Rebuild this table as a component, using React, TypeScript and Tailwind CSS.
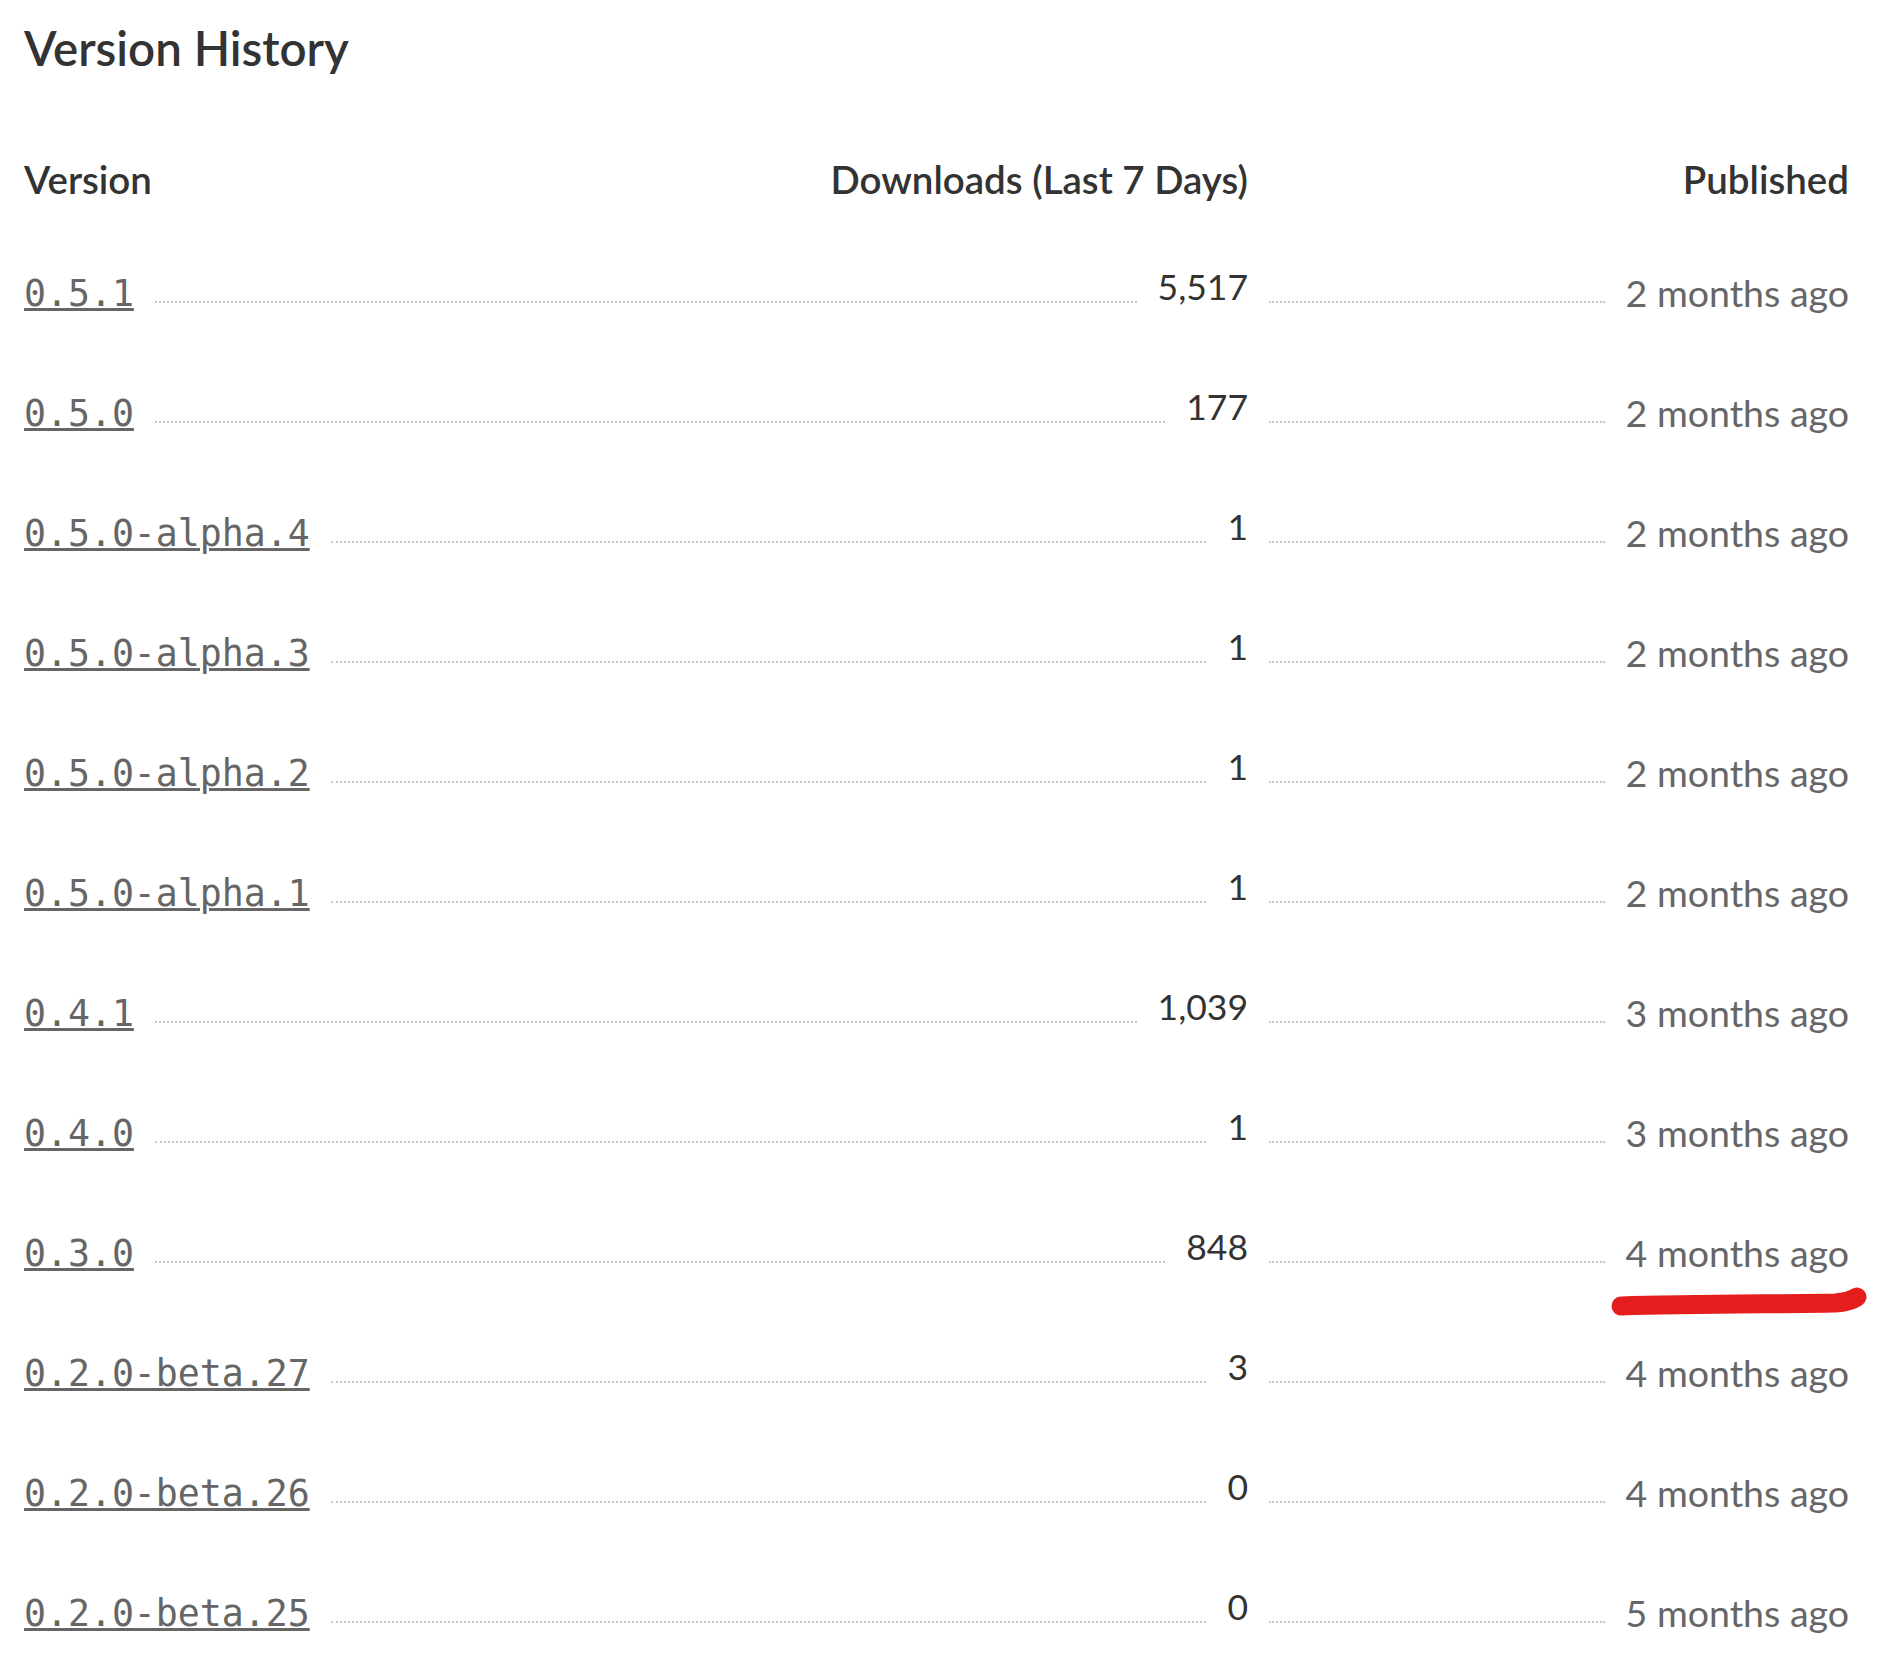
import React from "react";

interface Version {
  version: string;
  downloads: string;
  published: string;
}

const versions: Version[] = [
  { version: "0.5.1", downloads: "5,517", published: "2 months ago" },
  { version: "0.5.0", downloads: "177", published: "2 months ago" },
  { version: "0.5.0-alpha.4", downloads: "1", published: "2 months ago" },
  { version: "0.5.0-alpha.3", downloads: "1", published: "2 months ago" },
  { version: "0.5.0-alpha.2", downloads: "1", published: "2 months ago" },
  { version: "0.5.0-alpha.1", downloads: "1", published: "2 months ago" },
  { version: "0.4.1", downloads: "1,039", published: "3 months ago" },
  { version: "0.4.0", downloads: "1", published: "3 months ago" },
  { version: "0.3.0", downloads: "848", published: "4 months ago" },
  { version: "0.2.0-beta.27", downloads: "3", published: "4 months ago" },
  { version: "0.2.0-beta.26", downloads: "0", published: "4 months ago" },
  { version: "0.2.0-beta.25", downloads: "0", published: "5 months ago" },
];

const sans = "font-['Lato','Noto_Sans',sans-serif]";

export default function App() {
  return (
    <div className={`relative min-h-[1680px] bg-white px-6 ${sans}`}>
      {/* title */}
      <h2 className="pt-[20px] text-[47.5px] leading-[56px] font-semibold text-[#333]">
        Version History
      </h2>

      <div className="w-[1825px]">
        {/* header row */}
        <div className="mt-[81px] flex h-[44px] items-baseline text-[38.5px] leading-[44px] font-semibold text-[#333]">
          <div className="flex flex-1 items-baseline justify-between">
            <span>Version</span>
            <span>Downloads (Last 7 Days)</span>
          </div>
          <div className="w-[601px] text-right">Published</div>
        </div>

        {/* rows */}
        <div className="mt-[69px]">
          {versions.map((v) => (
            <div key={v.version} className="flex h-[120px] items-baseline leading-[44px]">
              <div className="flex flex-1 items-baseline">
                <a
                  href="#"
                  className="font-['DejaVu_Sans_Mono','Liberation_Mono',monospace] text-[36.5px] text-[#666] underline decoration-[3px] underline-offset-2"
                >
                  {v.version}
                </a>
                <div className="mx-[21px] flex-1 -translate-y-[3px] border-b-2 border-dotted border-[#c8c8c8]" />
                <span className="-translate-y-[6px] text-[35.5px] text-[#333]">
                  {v.downloads}
                </span>
              </div>
              <div className="flex w-[601px] items-baseline">
                <div className="mx-[21px] flex-1 -translate-y-[3px] border-b-2 border-dotted border-[#c8c8c8]" />
                <span className="translate-y-[1px] text-[37.5px] text-[#666]">
                  {v.published}
                </span>
              </div>
            </div>
          ))}
        </div>
      </div>

      {/* red marker annotation */}
      <svg
        className="pointer-events-none absolute left-[1600px] top-[1275px]"
        width="292"
        height="45"
        viewBox="0 0 292 45"
      >
        <path
          d="M21 31 C 90 29, 170 29, 235 28 C 249 27, 254 24, 257 22"
          fill="none"
          stroke="#e41d1d"
          strokeWidth="19"
          strokeLinecap="round"
        />
      </svg>
    </div>
  );
}
